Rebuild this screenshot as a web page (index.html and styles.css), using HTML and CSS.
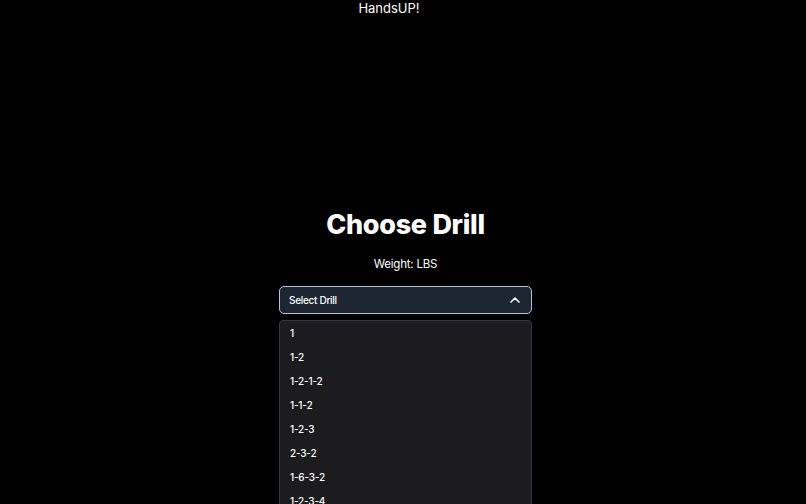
FILE: index.html
```html
<!DOCTYPE html>
<html>
<head>
<meta charset="utf-8">
<link rel="stylesheet" href="styles.css">
</head>
<body>
<header class="top">HandsUP!</header>
<main class="main">
  <h1 class="title">Choose Drill</h1>
  <p class="weight">Weight: LBS</p>
  <div class="picker">
    <div class="select">
      <span>Select Drill</span>
      <svg class="chev" width="10" height="6" viewBox="0 0 10 6"><path d="M1 5 L5 1 L9 5" fill="none" stroke="#fff" stroke-width="1.6" stroke-linecap="round" stroke-linejoin="round"/></svg>
    </div>
    <ul class="list">
      <li>1</li>
      <li>1-2</li>
      <li>1-2-1-2</li>
      <li>1-1-2</li>
      <li>1-2-3</li>
      <li>2-3-2</li>
      <li>1-6-3-2</li>
      <li>1-2-3-4</li>
    </ul>
  </div>
</main>
</body>
</html>
```
FILE: styles.css
```css
html, body {
  margin: 0;
  padding: 0;
  background: #000;
  color: #fff;
  font-family: Inter, "Noto Sans", sans-serif;
  height: 504px;
  overflow: hidden;
}
.top {
  text-align: center;
  font-size: 13px;
  line-height: 16px;
  padding-right: 28px;
  color: #fff;
}
.main {
  display: flex;
  flex-direction: column;
  align-items: center;
  padding-top: 193px;
  padding-left: 5px;
}
.title {
  margin: 0;
  font-size: 27px;
  font-weight: 800;
  line-height: 32px;
  letter-spacing: -0.3px;
}
.weight {
  margin: 16px 0 0;
  font-size: 11.5px;
  line-height: 14px;
  letter-spacing: -0.2px;
}
.picker {
  width: 253px;
  margin-top: 15px;
}
.select {
  box-sizing: border-box;
  height: 28px;
  border: 1.5px solid #b4c2dc;
  border-radius: 5px;
  background: #1e2634;
  display: flex;
  align-items: center;
  justify-content: space-between;
  padding: 0 11px 0 9px;
  font-size: 10px;
  font-weight: 500;
  letter-spacing: -0.3px;
}
.chev { display: block; }
.list {
  list-style: none;
  margin: 6px 0 0;
  padding: 0;
  background: #1c1c1e;
  border: 1px solid #34364a;
  border-radius: 4px;
}
.list li {
  height: 24px;
  line-height: 24px;
  padding-left: 10px;
  font-size: 10px;
  font-weight: 500;
  letter-spacing: -0.2px;
  color: #fff;
}
```
